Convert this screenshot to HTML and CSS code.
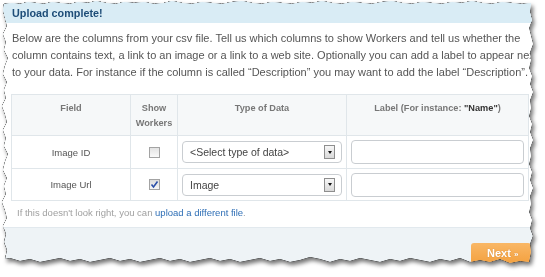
FILE: index.html
```html
<!DOCTYPE html>
<html lang="en">
<head>
    <meta charset="UTF-8">
    <title>Upload complete</title>
    <link rel="stylesheet" href="styles.css">
</head>
<body>
    <div class="sheet">
        <div class="page">
            <div class="content">
                <h2 class="title">Upload complete!</h2>
                <p class="intro">Below are the columns from your csv file. Tell us which columns to show Workers and tell us whether the column contains text, a link to an image or a link to a web site. Optionally you can add a label to appear next to your data. For instance if the column is called &ldquo;Description&rdquo; you may want to add the label &ldquo;Description&rdquo;.</p>

                <table class="columns">
                    <colgroup>
                        <col class="c-field">
                        <col class="c-show">
                        <col class="c-type">
                        <col class="c-label">
                    </colgroup>
                    <thead>
                        <tr>
                            <th>Field</th>
                            <th>Show Workers</th>
                            <th>Type of Data</th>
                            <th>Label (For instance: <b>"Name"</b>)</th>
                        </tr>
                    </thead>
                    <tbody>
                        <tr class="row-1">
                            <td>Image ID</td>
                            <td><span class="check"></span></td>
                            <td>
                                <div class="select"><span>&lt;Select type of data&gt;</span><span class="arrow"></span></div>
                            </td>
                            <td><input class="label-input" type="text"></td>
                        </tr>
                        <tr class="row-2">
                            <td>Image Url</td>
                            <td>
                                <span class="check checked">
                                    <svg width="9" height="9" viewBox="0 0 9 9"><path d="M1.5 4.5 L3.5 7 L7.5 1.5" fill="none" stroke="#2b4fa8" stroke-width="1.6"/></svg>
                                </span>
                            </td>
                            <td>
                                <div class="select"><span>Image</span><span class="arrow"></span></div>
                            </td>
                            <td><input class="label-input" type="text"></td>
                        </tr>
                    </tbody>
                </table>

                <p class="note">If this doesn't look right, you can <a href="#">upload a different file</a>.</p>
            </div>

            <div class="actions">
                <a href="#" class="next">Next <small>&raquo;</small></a>
            </div>
        </div>
    </div>
</body>
</html>
```

FILE: styles.css
```css
body {
    margin: 0;
    font-family: "Liberation Sans", Arial, sans-serif;
    background: #ffffff;
}

/* torn paper look */
.sheet {
    width: 545px;
    height: 277px;
    filter: drop-shadow(0 0 0.5px #000) drop-shadow(0 0 0.5px #000) drop-shadow(2px 3px 2px rgba(0, 0, 0, 0.55));
}

.page {
    width: 545px;
    height: 277px;
    background: #eef3f6;
    overflow: hidden;
    clip-path: polygon(
        4px 4px, 12px 3px, 20px 4px, 28px 2px, 36px 3px, 44px 4px, 52px 2px, 60px 3px, 70px 4px, 78px 2px,
        88px 3px, 96px 1px, 106px 3px, 116px 4px, 124px 2px, 134px 3px, 144px 2px, 154px 4px, 164px 3px, 172px 1px,
        182px 3px, 192px 4px, 202px 2px, 212px 3px, 222px 4px, 232px 2px, 242px 1px, 252px 3px, 262px 4px, 272px 2px,
        282px 3px, 292px 4px, 302px 2px, 312px 3px, 322px 1px, 332px 3px, 342px 4px, 352px 2px, 362px 3px, 372px 4px,
        382px 2px, 392px 1px, 402px 3px, 412px 4px, 422px 2px, 432px 3px, 442px 4px, 452px 2px, 462px 3px, 472px 1px,
        482px 3px, 492px 4px, 502px 2px, 512px 3px, 522px 4px, 531px 3px,
        530px 12px, 532px 20px, 529px 28px, 531px 36px, 533px 44px, 530px 52px, 531px 60px, 529px 68px, 532px 76px,
        530px 84px, 533px 92px, 530px 100px, 531px 108px, 529px 116px, 532px 124px, 530px 132px, 533px 140px,
        530px 148px, 531px 156px, 529px 164px, 532px 172px, 530px 180px, 533px 188px, 530px 196px, 531px 204px,
        529px 212px, 532px 220px, 530px 228px, 533px 236px, 530px 244px, 531px 252px, 529px 262px,
        520px 261px, 510px 263px, 500px 259px, 490px 262px, 480px 260px, 470px 262px, 460px 258px, 450px 261px,
        440px 259px, 430px 262px, 420px 260px, 410px 258px, 400px 261px, 390px 259px, 380px 262px, 370px 260px,
        360px 258px, 350px 261px, 340px 259px, 330px 262px, 320px 259px, 310px 257px, 300px 260px, 290px 262px,
        280px 259px, 270px 261px, 260px 258px, 250px 260px, 240px 262px, 230px 259px, 220px 261px, 210px 258px,
        200px 260px, 190px 262px, 180px 259px, 170px 261px, 160px 258px, 150px 260px, 140px 262px, 130px 259px,
        120px 261px, 110px 258px, 100px 260px, 90px 262px, 80px 259px, 70px 261px, 60px 258px, 50px 260px,
        40px 262px, 30px 259px, 20px 261px, 10px 258px, 5px 259px,
        7px 250px, 4px 242px, 6px 234px, 3px 226px, 7px 218px, 5px 210px, 2px 202px, 6px 194px, 4px 186px,
        7px 178px, 3px 170px, 5px 162px, 8px 154px, 4px 146px, 6px 138px, 3px 130px, 7px 122px, 5px 114px,
        2px 106px, 6px 98px, 4px 90px, 7px 82px, 3px 74px, 5px 66px, 8px 58px, 4px 50px, 6px 42px, 3px 34px,
        7px 26px, 5px 18px, 3px 10px
    );
}

.content {
    background: #ffffff;
    height: 228px;
    border-bottom: 1px solid #e2e9ee;
    box-sizing: border-box;
}

.title {
    margin: 0;
    height: 23px;
    box-sizing: border-box;
    padding: 6px 12px 0;
    background: #d9ecf5;
    color: #1e4d78;
    font-size: 10.8px;
    line-height: 14px;
    font-weight: bold;
}

.intro {
    margin: 7px 0 0 12px;
    width: 529px;
    font-size: 11px;
    line-height: 17px;
    color: #555555;
}

.columns {
    margin: 13px 0 0 11px;
    width: 517px;
    border-collapse: collapse;
    font-size: 9.5px;
    color: #555555;
    table-layout: fixed;
}

.c-field { width: 119px; }
.c-show { width: 47px; }
.c-type { width: 169px; }
.c-label { width: 182px; }

.columns th,
.columns td {
    border: 1px solid #e0e6ea;
    text-align: center;
}

.columns th {
    background: #f6f8f9;
    color: #777777;
    font-size: 9.2px;
    font-weight: bold;
    vertical-align: top;
    line-height: 15px;
    padding: 6px 4px 3px;
    height: 31px;
}

.columns th b {
    color: #333333;
}

.columns td {
    padding: 0 4px;
    vertical-align: middle;
}

.row-1 td { height: 32px; }
.row-2 td { height: 31px; }

.check {
    display: inline-block;
    width: 9px;
    height: 9px;
    border: 1px solid #a3a3a3;
    background: linear-gradient(#e3e3e3, #fafafa);
    vertical-align: middle;
    line-height: 0;
}

.check.checked {
    background: linear-gradient(#dcdcdc, #f6f6f6);
}

.select {
    display: flex;
    align-items: center;
    justify-content: space-between;
    height: 22px;
    box-sizing: border-box;
    border: 1px solid #c9cdd1;
    border-radius: 4px;
    padding: 0 6px 0 7px;
    font-size: 10.5px;
    color: #444444;
    text-align: left;
}

.arrow {
    width: 9px;
    height: 12px;
    border: 1px solid #8e8e8e;
    background: linear-gradient(#f7f7f7, #d9d9d9);
    display: flex;
    align-items: center;
    justify-content: center;
}

.arrow::after {
    content: "";
    border-left: 2.5px solid transparent;
    border-right: 2.5px solid transparent;
    border-top: 3px solid #111111;
}

.label-input {
    display: block;
    width: 100%;
    height: 24px;
    box-sizing: border-box;
    border: 1px solid #c9cdd1;
    border-radius: 4px;
    margin: 0;
}

.note {
    margin: 6px 0 0 17px;
    font-size: 9.5px;
    color: #a0a0a0;
}

.note a {
    color: #2f6fb6;
    text-decoration: none;
}

.actions {
    display: flex;
    justify-content: flex-end;
    padding: 15px 14px 0 0;
}

.next {
    width: 60px;
    height: 26px;
    box-sizing: border-box;
    padding: 4px 0 0 16px;
    border-radius: 3px 3px 0 0;
    background: linear-gradient(#f9b766, #f29b35);
    color: #ffffff;
    font-size: 11px;
    font-weight: bold;
    text-decoration: none;
    text-shadow: 0 0 1px rgba(160, 80, 0, 0.5);
}

.next small {
    font-size: 8px;
}
```
